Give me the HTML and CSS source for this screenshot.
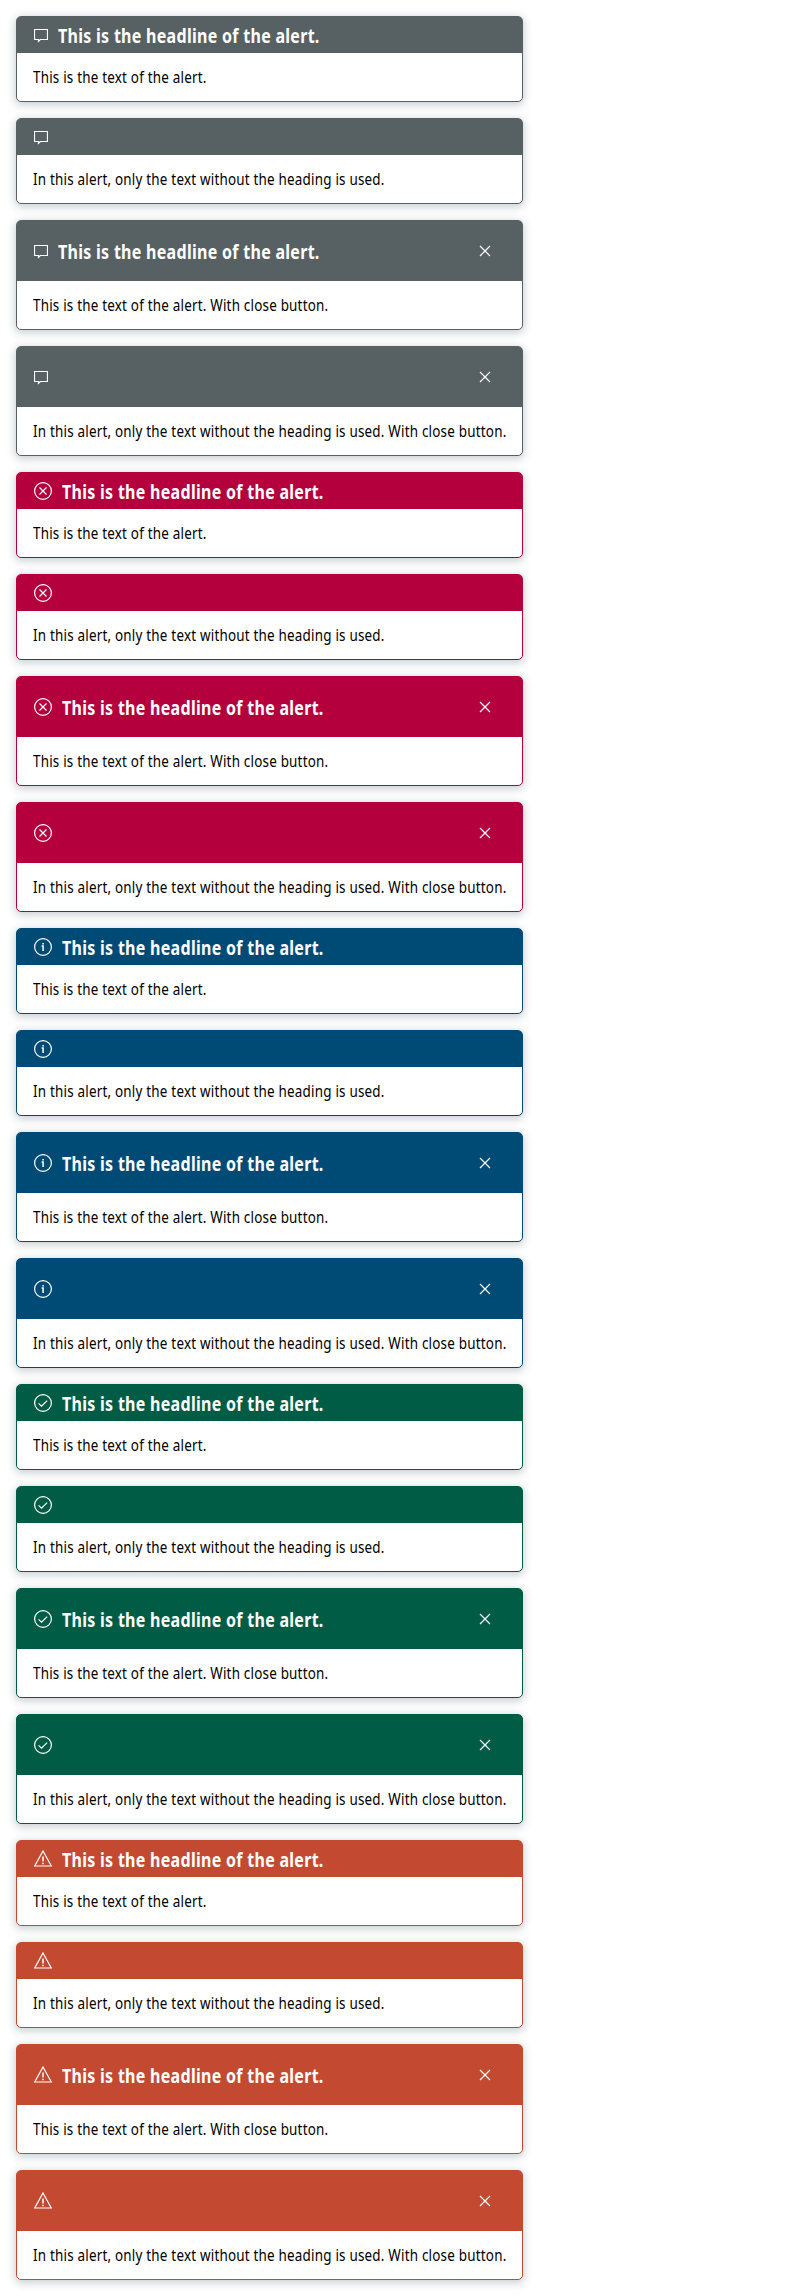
FILE: index.html
```html
<!DOCTYPE html>
<html lang="en">
<head>
<meta charset="utf-8">
<title>Alerts</title>
<link rel="stylesheet" href="styles.css">
</head>
<body>
<svg class="sprite" aria-hidden="true">
  <symbol id="default" viewBox="0 0 14 18"><path d="M.5 3.5h13v10H6.3L4.5 15.3v-1.8h-4z"/></symbol>
  <symbol id="error" viewBox="0 0 18 18"><circle cx="9" cy="9" r="8.4"/><path d="M5.5 5.5l7 7m0-7l-7 7"/></symbol>
  <symbol id="info" viewBox="0 0 18 18"><circle cx="9" cy="9" r="8.4"/><path d="M7.6 8h1.5v5M9.1 5v1.5" stroke-width="1.5"/></symbol>
  <symbol id="success" viewBox="0 0 18 18"><circle cx="9" cy="9" r="8.4"/><path d="M4.6 9.4l2.9 2.7 5.7-5.5"/></symbol>
  <symbol id="warning" viewBox="0 0 18 18"><path d="M9 1L17.3 16H.7z"/><path d="M9 6.5v5M9 12.8v1.5" stroke-width="1.5"/></symbol>
  <symbol id="close" viewBox="0 0 12 12"><path d="M1 1l10 10M11 1L1 11"/></symbol>
</svg>
<main class="alerts" id="alerts"></main>
<script src="alerts.js"></script>
</body>
</html>
```
FILE: styles.css
```css
body {
  margin: 0;
  background: #fff;
  color: #000;
  font: 16px/24px "Noto Sans", "Liberation Sans", sans-serif;
}
.sprite { display: none; }
.alerts {
  display: flex;
  flex-direction: column;
  gap: 16px;
  width: 507px;
  padding: 16px;
}
.alert {
  --tone: #576164;
  box-sizing: border-box;
  border: 1px solid var(--tone);
  border-radius: 5px;
  background: #fff;
  box-shadow: 0 2px 8px 1px rgba(8, 35, 48, .22);
}
.alert-error { --tone: #b4003c; }
.alert-info { --tone: #004b76; }
.alert-success { --tone: #005c45; }
.alert-warning { --tone: #c44931; }
.alert-header {
  display: flex;
  align-items: center;
  box-sizing: border-box;
  height: 36px;
  padding: 0 16px;
  border-radius: 3px 3px 0 0;
  background: var(--tone);
  color: #fff;
}
.closable .alert-header { height: 60px; }
.icon {
  flex: none;
  width: 18px;
  height: 18px;
  margin-left: 1px;
  fill: none;
  stroke: #fff;
  stroke-width: 1.2;
}
.icon-default { width: 14px; }
.headline {
  margin: 2px 0 0 9.5px;
  font-size: 20px;
  line-height: 24px;
  font-weight: 700;
  letter-spacing: .36px;
  white-space: nowrap;
  transform: scaleX(.8);
  transform-origin: 0 50%;
}
.close {
  display: grid;
  place-items: center;
  flex: none;
  width: 43px;
  height: 44px;
  margin-left: auto;
  padding: 0;
  border: 0;
  background: none;
}
.close svg {
  width: 12px;
  height: 12px;
  fill: none;
  stroke: #fff;
  stroke-width: 1.2;
}
.alert-text {
  margin: 0;
  padding: 12px 0;
  white-space: nowrap;
}
.alert-text span {
  display: inline-block;
  margin-left: 16px;
  letter-spacing: .24px;
  transform: scaleX(.84);
  transform-origin: 0 50%;
}
```
FILE: alerts.js
```js
const variants = [
  { headline: true, closable: false, text: "This is the text of the alert." },
  { headline: false, closable: false, text: "In this alert, only the text without the heading is used." },
  { headline: true, closable: true, text: "This is the text of the alert. With close button." },
  { headline: false, closable: true, text: "In this alert, only the text without the heading is used. With close button." }
];
document.getElementById("alerts").innerHTML = ["default", "error", "info", "success", "warning"].map(type =>
  variants.map(v => `
  <article class="alert alert-${type}${v.closable ? " closable" : ""}">
    <header class="alert-header">
      <svg class="icon icon-${type}"><use href="#${type}"/></svg>
      ${v.headline ? '<h2 class="headline">This is the headline of the alert.</h2>' : ""}
      ${v.closable ? '<button class="close" aria-label="Close"><svg><use href="#close"/></svg></button>' : ""}
    </header>
    <p class="alert-text"><span>${v.text}</span></p>
  </article>`).join("")
).join("");
```
